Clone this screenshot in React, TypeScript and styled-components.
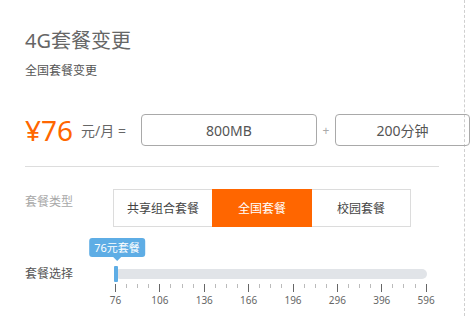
import React from "react";
import styled, { createGlobalStyle } from "styled-components";

const GlobalStyle = createGlobalStyle`
  html, body { margin: 0; padding: 0; background: #fff; }
  body {
    font-family: "Noto Sans", "Noto Sans CJK SC", "Microsoft YaHei", sans-serif;
    color: #555;
  }
`;

const Page = styled.div`
  box-sizing: border-box;
  width: 465px;
  min-height: 316px;
  padding: 29px 0 0 25px;
  border-right: 1px dashed #cfcfcf;
`;

const Title = styled.h1`
  margin: 0;
  font-size: 20px;
  line-height: 24px;
  font-weight: 400;
  color: #666;
`;

const Subtitle = styled.div`
  margin-top: 10px;
  font-size: 12px;
  line-height: 16px;
  color: #555;
`;

const PriceRow = styled.div`
  display: flex;
  align-items: center;
  margin-top: 35px;
`;

const Price = styled.span`
  font-size: 28px;
  line-height: 32px;
  color: #ff6600;
`;

const Unit = styled.span`
  margin-left: 8px;
  font-size: 14px;
  color: #666;
  white-space: nowrap;
`;

const ValueBox = styled.div<{ $w: number; $gap: number }>`
  box-sizing: border-box;
  flex-shrink: 0;
  width: ${(p) => p.$w}px;
  height: 32px;
  margin-left: ${(p) => p.$gap}px;
  border: 1px solid #a9a9a9;
  border-radius: 4px;
  display: flex;
  align-items: center;
  justify-content: center;
  font-size: 14px;
  color: #555;
`;

const Plus = styled.span`
  width: 18px;
  text-align: center;
  font-size: 12px;
  color: #aaa;
  flex-shrink: 0;
`;

const Divider = styled.div`
  width: 414px;
  height: 1px;
  margin-top: 20px;
  background: #ddd;
`;

const FieldRow = styled.div<{ $top: number }>`
  display: flex;
  align-items: flex-start;
  margin-top: ${(p) => p.$top}px;
`;

const Label = styled.div<{ $muted?: boolean; $offset: number }>`
  width: 88px;
  flex-shrink: 0;
  font-size: 12px;
  line-height: 16px;
  margin-top: ${(p) => p.$offset}px;
  color: ${(p) => (p.$muted ? "#a8a8a8" : "#555")};
`;

const Segments = styled.div`
  display: flex;
`;

const Segment = styled.div<{ $active?: boolean }>`
  box-sizing: border-box;
  width: 100px;
  height: 38px;
  display: flex;
  align-items: center;
  justify-content: center;
  font-size: 12px;
  border: 1px solid ${(p) => (p.$active ? "#ff6600" : "#dcdcdc")};
  background: ${(p) => (p.$active ? "#ff6600" : "#fff")};
  color: ${(p) => (p.$active ? "#fff" : "#444")};
  & + & { margin-left: -1px; }
  position: relative;
  z-index: ${(p) => (p.$active ? 1 : 0)};
`;

const SliderBox = styled.div`
  padding-left: 2px;
  width: 312px;
`;

const Track = styled.div`
  position: relative;
  height: 10px;
  border-radius: 5px;
  background: #e1e4e8;
`;

const Handle = styled.div`
  position: absolute;
  left: -1px;
  top: -3px;
  width: 4px;
  height: 16px;
  border-radius: 1px;
  background: #5eade5;
`;

const Tip = styled.div`
  position: absolute;
  left: 2px;
  bottom: 22px;
  transform: translateX(-50%);
  height: 19px;
  padding: 0 5px;
  border-radius: 3px;
  background: #5eade5;
  color: #fff;
  font-size: 11px;
  line-height: 19px;
  white-space: nowrap;
  &::after {
    content: "";
    position: absolute;
    left: 50%;
    top: 100%;
    margin-left: -4px;
    border: 4px solid transparent;
    border-top-color: #5eade5;
  }
`;

const Ticks = styled.div`
  display: flex;
  justify-content: space-between;
  align-items: flex-start;
  margin-top: 5px;
`;

const Tick = styled.div`
  width: 1px;
  display: flex;
  flex-direction: column;
  align-items: center;
`;

const Mark = styled.div<{ $major?: boolean }>`
  width: 1px;
  height: ${(p) => (p.$major ? 8 : 4)}px;
  background: ${(p) => (p.$major ? "#666" : "#bbb")};
`;

const TickLabel = styled.div`
  margin-top: 2px;
  font-size: 10px;
  line-height: 12px;
  color: #666;
  white-space: nowrap;
`;

const majors = ["76", "106", "136", "166", "196", "296", "396", "596"];
const ticks: (string | null)[] = [];
majors.forEach((m, i) => {
  ticks.push(m);
  if (i < majors.length - 1) ticks.push(null, null, null);
});

export default function App() {
  return (
    <>
      <GlobalStyle />
      <Page>
        <Title>4G套餐变更</Title>
        <Subtitle>全国套餐变更</Subtitle>
        <PriceRow>
          <Price>¥76</Price>
          <Unit>元/月 =</Unit>
          <ValueBox $w={176} $gap={15}>800MB</ValueBox>
          <Plus>+</Plus>
          <ValueBox $w={135} $gap={0}>200分钟</ValueBox>
        </PriceRow>
        <Divider />
        <FieldRow $top={22}>
          <Label $muted $offset={5}>套餐类型</Label>
          <Segments>
            <Segment>共享组合套餐</Segment>
            <Segment $active>全国套餐</Segment>
            <Segment>校园套餐</Segment>
          </Segments>
        </FieldRow>
        <FieldRow $top={42}>
          <Label $offset={-3}>套餐选择</Label>
          <SliderBox>
            <Track>
              <Handle />
              <Tip>76元套餐</Tip>
            </Track>
            <Ticks>
              {ticks.map((t, i) => (
                <Tick key={i}>
                  <Mark $major={t !== null} />
                  {t !== null && <TickLabel>{t}</TickLabel>}
                </Tick>
              ))}
            </Ticks>
          </SliderBox>
        </FieldRow>
      </Page>
    </>
  );
}
